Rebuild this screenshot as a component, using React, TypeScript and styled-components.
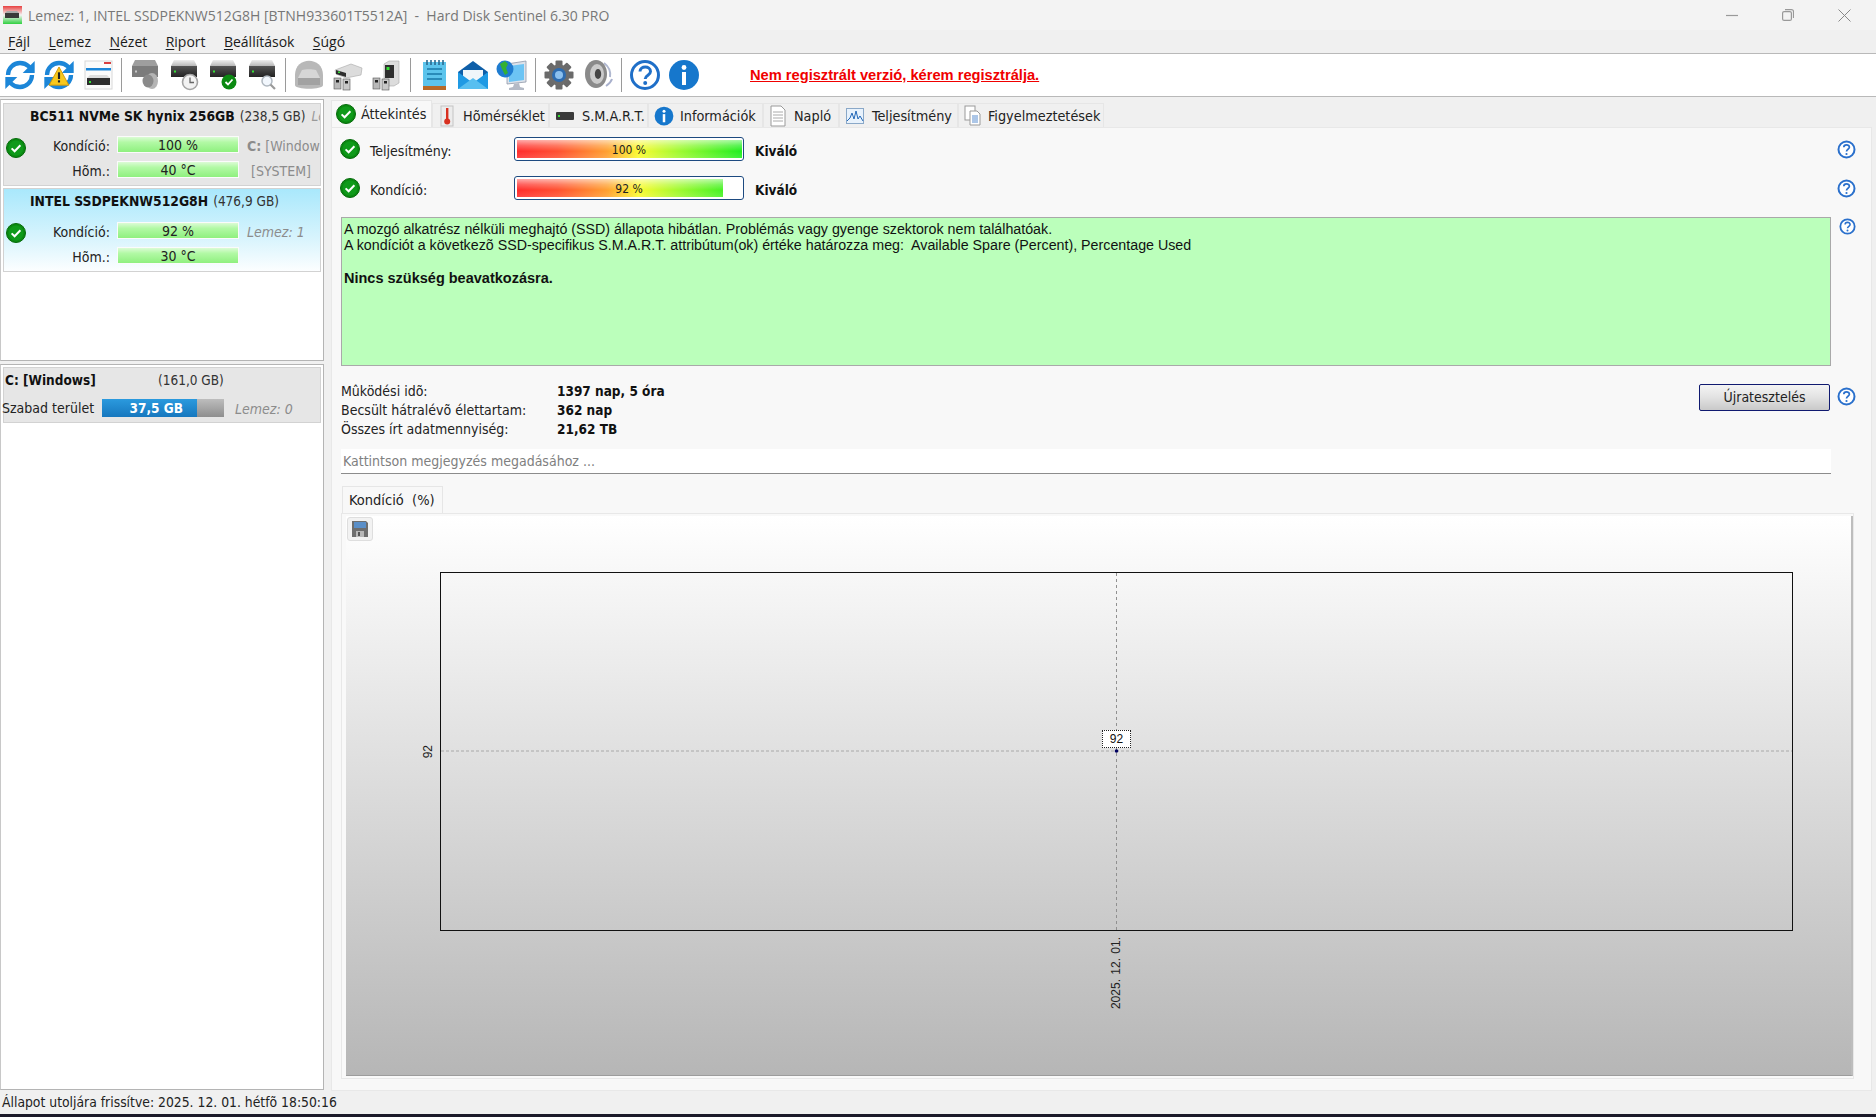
import React from 'react';
import styled, { createGlobalStyle } from 'styled-components';

const GlobalStyle = createGlobalStyle`
  html, body { margin: 0; padding: 0; background: #f0f0f0; }
  body { overflow: hidden; }
  * { box-sizing: border-box; }
`;

const tahoma = `"DejaVu Sans", "Liberation Sans", sans-serif`;
const segoe = `"Open Sans", "Noto Sans", sans-serif`;

const Win = styled.div`
  width: 1876px;
  height: 1117px;
  display: flex;
  flex-direction: column;
  background: #f0f0f0;
  color: #111;
  font-family: ${tahoma};
  font-stretch: condensed;
  font-size: 14px;
  overflow: hidden;
`;

const TitleBar = styled.div`
  height: 30px;
  flex: none;
  display: flex;
  align-items: center;
  padding-left: 3px;
  background: #f3f3f3;
  font-family: ${segoe};
  font-stretch: normal;
  font-size: 14px;
  color: #777;
  white-space: pre;
`;

const TitleText = styled.span`
  margin-left: 6px;
  flex: 1;
`;

const WinControls = styled.div`
  display: flex;
  align-items: center;
  gap: 44px;
  padding-right: 25px;
`;

const MenuBar = styled.div`
  height: 23px;
  flex: none;
  display: flex;
  align-items: center;
  gap: 18.4px;
  padding-left: 8px;
  font-family: ${segoe};
  font-stretch: normal;
  font-size: 14px;
  color: #1a1a1a;
  u { text-underline-offset: 2px; }
`;

const Toolbar = styled.div`
  height: 44px;
  flex: none;
  display: flex;
  align-items: center;
  padding-left: 3px;
  background: #fff;
  border-top: 1px solid #b9b9b9;
  border-bottom: 1px solid #b9b9b9;
`;

const ToolBtn = styled.div`
  width: 34px;
  height: 34px;
  margin-right: 5px;
  display: flex;
  align-items: center;
  justify-content: center;
  flex: none;
`;

const ToolSep = styled.div`
  width: 1px;
  height: 34px;
  background: #9a9a9a;
  margin: 0 6px 0 1px;
  flex: none;
`;

const Nag = styled.a`
  margin-left: 44px;
  color: #f00000;
  font-family: "Liberation Sans", Arial, sans-serif;
  font-stretch: normal;
  font-weight: 700;
  font-size: 14.67px;
  text-decoration: underline;
`;

const Main = styled.div`
  height: 993px;
  flex: none;
  display: flex;
`;

const LeftCol = styled.div`
  width: 324px;
  flex: none;
  display: flex;
  flex-direction: column;
  gap: 3px;
  padding-top: 2px;
`;

const ListBox = styled.div<{ $fill?: boolean }>`
  background: #fff;
  border: 1px solid #b4b4b4;
  border-left-color: #c8c8c8;
  padding: ${({ $fill }) => ($fill ? '2px' : '3px')} 2px 0 2px;
  ${({ $fill }) => ($fill ? 'flex: 1;' : 'height: 262px; flex: none;')}
`;

const DiskCard = styled.div<{ $selected?: boolean }>`
  height: ${({ $selected }) => ($selected ? '84px' : '83px')};
  margin-bottom: ${({ $selected }) => ($selected ? '0' : '2px')};
  padding: 4px 0 0 26px;
  position: relative;
  overflow: hidden;
  white-space: nowrap;
  background: ${({ $selected }) =>
    $selected ? 'linear-gradient(180deg, #a9e8fc 0%, #d8f4fd 60%, #fcfeff 100%)' : '#e6e6e6'};
  border: 1px solid #d2d2d2;
`;

const CardCheck = styled.div`
  position: absolute;
  left: 2px;
  top: 34px;
`;

const DiskName = styled.div<{ $tall?: boolean }>`
  height: ${({ $tall }) => ($tall ? '21px' : '20px')};
  line-height: 17px;
  font-size: 13.8px;
  b { font-weight: 700; color: #111; }
  span { font-size: 13.5px; color: #333; margin-left: 5px; }
  i { font-size: 13.5px; color: #999; margin-left: 6px; }
`;

const StatRow = styled.div`
  display: flex;
  align-items: center;
  height: 18px;
  margin-top: 7px;
  & + & { margin-top: 7px; }
`;

const StatLabel = styled.div`
  width: 80px;
  padding-top: 3px;
  flex: none;
  text-align: right;
  color: #222;
`;

const MiniBar = styled.div`
  width: 122px;
  height: 17px;
  margin-left: 7px;
  flex: none;
  text-align: center;
  line-height: 17px;
  border: 1px solid #fbfbfb;
  background: linear-gradient(180deg, #dcfbd6 0%, #b2f9a5 35%, #8ff07f 100%);
  color: #222;
`;

const SideNote = styled.div<{ $italic?: boolean; $indent?: number }>`
  margin-left: ${({ $indent }) => $indent ?? 8}px;
  padding-top: 3px;
  flex: none;
  color: #8c8c8c;
  font-style: ${({ $italic }) => ($italic ? 'italic' : 'normal')};
  b { font-weight: 700; }
`;

const VolumeCard = styled.div`
  height: 56px;
  background: #e6e6e6;
  border: 1px solid #d2d2d2;
  padding: 3px 0 0 1px;
  white-space: nowrap;
`;

const VolumeHead = styled.div`
  display: flex;
  height: 18px;
  line-height: 18px;
  b { width: 153px; font-weight: 700; font-size: 13.5px; }
  span { font-size: 13.5px; color: #333; }
`;

const VolumeRow = styled.div`
  display: flex;
  align-items: center;
  margin-top: 9px;
  margin-left: -3px;
`;

const VolumeLabel = styled.div`
  width: 100px;
  flex: none;
  color: #222;
`;

const FreeBar = styled.div`
  width: 122px;
  height: 18px;
  flex: none;
  background: linear-gradient(180deg, #bdbdbd, #8e8e8e);
  overflow: hidden;
`;

const FreeFill = styled.div`
  height: 100%;
  background: linear-gradient(180deg, #2b9ade, #1677be);
  color: #fff;
  font-weight: 700;
  font-size: 13.5px;
  line-height: 18px;
  text-align: center;
  padding-left: 14px;
`;

const RightCol = styled.div`
  width: 1541px;
  margin-left: 7px;
  flex: none;
  display: flex;
  flex-direction: column;
`;

const TabStrip = styled.div`
  height: 30px;
  flex: none;
  display: flex;
  align-items: flex-end;
`;

const Tab = styled.div<{ $active?: boolean; $w: number }>`
  width: ${({ $w }) => $w}px;
  height: ${({ $active }) => ($active ? '27px' : '24px')};
  flex: none;
  display: flex;
  align-items: center;
  gap: 5px;
  padding-left: 3px;
  white-space: nowrap;
  font-size: 14.3px;
  background: ${({ $active }) => ($active ? '#f8f8f8' : '#f0f0f0')};
  border: 1px solid #e6e6e6;
  border-bottom: none;
  color: #222;
`;

const TabIcon = styled.span<{ $w: number }>`
  width: ${({ $w }) => $w}px;
  flex: none;
  display: flex;
  align-items: center;
  justify-content: center;
`;

const Panel = styled.div`
  flex: 1;
  background: #f8f8f8;
  border: 1px solid #e8e8e8;
  padding: 9px 15px 11px 8px;
  display: flex;
  flex-direction: column;
`;

const RatingRow = styled.div`
  height: 24px;
  display: flex;
  align-items: center;
  margin-bottom: 15px;
`;

const RatingLabel = styled.div`
  width: 154px;
  padding: 3px 0 0 10px;
  flex: none;
  color: #222;
`;

const RatingBar = styled.div`
  width: 230px;
  height: 24px;
  flex: none;
  background: #fff;
  border: 1px solid #1d4a80;
  border-radius: 3px;
  position: relative;
  text-align: center;
  line-height: 24px;
  font-size: 12px;
`;

const RatingFill = styled.div`
  position: absolute;
  left: 2px;
  top: 2px;
  bottom: 2px;
  overflow: hidden;
  &::before {
    content: '';
    position: absolute;
    left: 0;
    top: 0;
    bottom: 0;
    width: 225px;
    background:
      linear-gradient(180deg, rgba(255, 255, 255, 0.6) 0%, rgba(255, 255, 255, 0.25) 30%, rgba(255, 255, 255, 0) 62%, rgba(255, 255, 255, 0.12) 100%),
      linear-gradient(90deg, #ff2c2c 0%, #ff5030 18%, #ffa030 40%, #fbfb30 54%, #a0fa30 72%, #20ee20 100%);
  }
`;

const RatingText = styled.span`
  position: relative;
  color: #222;
`;

const RatingWord = styled.div`
  margin-left: 11px;
  padding-top: 3px;
  font-weight: 700;
  font-size: 13.5px;
  flex: 1;
`;

const HealthRow = styled.div`
  display: flex;
  align-items: flex-start;
  height: 149px;
  gap: 8px;
  margin-top: 2px;
`;

const HealthBox = styled.div`
  width: 1490px;
  height: 149px;
  margin-left: 1px;
  flex: none;
  padding: 3px 2px;
  background: #bbffbb;
  border: 1px solid #a9a9a9;
  font-family: "Liberation Sans", Arial, sans-serif;
  font-stretch: normal;
  font-size: 14.25px;
  line-height: 16.4px;
  color: #111;
  white-space: pre-wrap;
  p { margin: 0; }
  b { display: block; margin-top: 16.4px; font-size: 14.5px; }
`;

const StatsRow = styled.div`
  display: flex;
  margin-top: 15px;
  height: 57px;
`;

const StatsGrid = styled.div`
  width: 1361px;
  display: grid;
  grid-template-columns: 216px 1fr;
  grid-auto-rows: 19px;
  align-items: center;
  margin-left: 1px;
  color: #222;
  b { font-weight: 700; font-size: 13.5px; color: #111; }
`;

const RetestBtn = styled.div`
  width: 131px;
  height: 27px;
  margin-top: 3px;
  flex: none;
  border: 1px solid #101a70;
  border-radius: 2px;
  background: linear-gradient(180deg, #f4f4f4 0%, #e2e2e2 50%, #c9c9c9 100%);
  text-align: center;
  line-height: 25px;
  color: #222;
  font-size: 14px;
`;

const HelpSlot = styled.div`
  margin: 6px 0 0 7px;
`;

const NoteInput = styled.div`
  width: 1490px;
  height: 25px;
  margin: 11px 0 0 1px;
  padding-left: 2px;
  background: #fff;
  border-bottom: 1px solid #8c8c8c;
  line-height: 24px;
  color: #808080;
  font-size: 14px;
`;

const SubTab = styled.div`
  width: 101px;
  height: 27px;
  margin: 12px 0 0 2px;
  flex: none;
  padding-left: 6px;
  line-height: 26px;
  background: #f8f8f8;
  border: 1px solid #e6e6e6;
  border-bottom: none;
  color: #222;
  font-size: 14.5px;
  white-space: pre;
`;

const ChartFrame = styled.div`
  width: 1513px;
  height: 566px;
  margin-left: 1px;
  flex: none;
  padding: 2px 0 2px 4px;
  background: #f9f9f9;
  border: 1px solid #e8e8e8;
`;

const ChartBg = styled.div`
  position: relative;
  height: 100%;
  padding: 56px 0 0 94px;
  background: linear-gradient(180deg, #ffffff 0%, #b6b6b6 100%);
  border-right: 2px solid #bdbdbd;
  border-bottom: 1px solid #9c9c9c;
`;

const SaveBtn = styled.div`
  position: absolute;
  left: 1px;
  top: 1px;
  width: 26px;
  height: 24px;
  display: flex;
  align-items: center;
  justify-content: center;
  background: #f2f2f2;
  border: 1px solid #dedede;
  border-radius: 3px;
`;

const Plot = styled.div`
  position: relative;
  width: 1353px;
  height: 359px;
  border: 1px solid #111;
`;

const Crosshair = styled.svg`
  position: absolute;
  left: 0;
  top: 0;
`;

const ValueTag = styled.div`
  position: absolute;
  left: 661px;
  top: 157px;
  width: 29px;
  height: 18px;
  background: #fff;
  border: 1px dotted #222;
  text-align: center;
  line-height: 16px;
  font-family: "Liberation Sans", Arial, sans-serif;
  font-stretch: normal;
  font-size: 12px;
`;

const AxisLabel = styled.div<{ $left: number; $top: number }>`
  position: absolute;
  left: ${({ $left }) => $left}px;
  top: ${({ $top }) => $top}px;
  writing-mode: vertical-rl;
  transform: rotate(180deg);
  font-family: "Liberation Sans", Arial, sans-serif;
  font-stretch: normal;
  font-size: 12px;
  word-spacing: 1px;
  line-height: 14px;
  color: #222;
  white-space: pre;
`;

const StatusBar = styled.div`
  height: 24px;
  flex: none;
  padding-left: 2px;
  line-height: 25px;
  font-size: 13.8px;
  color: #222;
`;

const BottomEdge = styled.div`
  height: 3px;
  flex: none;
  background: #1c1a2a;
`;

const CheckIcon = ({ size = 20 }: { size?: number }) => (
  <svg width={size} height={size} viewBox="0 0 20 20">
    <circle cx="10" cy="10" r="9.5" fill="#0b8a12" stroke="#056a0a" />
    <circle cx="10" cy="10" r="7.4" fill="#0f9a1a" />
    <path d="M5.6 10.4l3 2.9 5.8-6" fill="none" stroke="#fff" strokeWidth="2" />
  </svg>
);

const HelpIcon = () => (
  <svg width="19" height="19" viewBox="0 0 19 19">
    <circle cx="9.5" cy="9.5" r="8" fill="#fff" stroke="#2a70cc" strokeWidth="2" />
    <path d="M6.8 7.3c0-3.2 5.6-3.2 5.6 0 0 2-2.9 2-2.9 4.2" fill="none" stroke="#2a70cc" strokeWidth="1.7" />
    <circle cx="9.5" cy="14" r="1.1" fill="#2a70cc" />
  </svg>
);

const Refresh = ({ warn }: { warn?: boolean }) => (
  <svg width="32" height="32" viewBox="0 0 24 24" fill="none" stroke="#1c86d8" strokeWidth="3.2">
    <path d="M3 12a9 9 0 0 1 9-9c2.5 0 5 1 6.7 2.7L20 7" />
    <path d="M21 12a9 9 0 0 1-9 9c-2.5 0-5-1-6.7-2.7L4 17" />
    <path d="M23 1.5v9h-9z" fill="#1c86d8" stroke="none" />
    <path d="M1 22.5v-9h9z" fill="#1c86d8" stroke="none" />
    {warn && (
      <g stroke="none">
        <path d="M12 6l7.4 13.6H4.6z" fill="#f8c81c" stroke="#d09808" strokeWidth="0.7" />
        <rect x="11.2" y="10" width="1.6" height="5" fill="#222" />
        <rect x="11.2" y="16" width="1.6" height="1.6" fill="#222" />
      </g>
    )}
  </svg>
);

const DriveGrad = () => (
  <defs>
    <linearGradient id="driveTop" x1="0" y1="0" x2="0" y2="1">
      <stop offset="0" stopColor="#efefef" />
      <stop offset="1" stopColor="#b8b8b8" />
    </linearGradient>
    <linearGradient id="driveBox" x1="0" y1="0" x2="0" y2="1">
      <stop offset="0" stopColor="#555" />
      <stop offset="1" stopColor="#222" />
    </linearGradient>
  </defs>
);

const DriveShape = ({ muted }: { muted?: boolean }) => (
  <g transform="translate(0 1)">
    <path d="M6 0h20l3 6H3z" fill={muted ? '#9e9e9e' : 'url(#driveTop)'} />
    <rect x="3" y="6" width="26" height="11" fill={muted ? '#7c7c7c' : 'url(#driveBox)'} />
    <rect x="6" y="10.5" width="2" height="2" fill={muted ? '#c8c8c8' : '#35e035'} />
  </g>
);

const Svg32 = ({ children }: { children: React.ReactNode }) => (
  <svg width="32" height="32" viewBox="0 0 32 32">
    <DriveGrad />
    {children}
  </svg>
);

const DriveSpeaker = () => (
  <Svg32>
    <DriveShape muted />
    <ellipse cx="23" cy="22" rx="6" ry="8" fill="#b4b4b4" />
    <ellipse cx="19" cy="22" rx="5.5" ry="6.5" fill="#8a8a8a" />
  </Svg32>
);

const DriveClock = () => (
  <Svg32>
    <DriveShape />
    <circle cx="22" cy="23" r="7.5" fill="#f2f2f2" stroke="#a4a4a4" strokeWidth="1.6" />
    <path d="M22 18.5V23.5h4" fill="none" stroke="#666" strokeWidth="1.3" />
  </Svg32>
);

const DriveCheck = () => (
  <Svg32>
    <DriveShape />
    <circle cx="22" cy="23" r="7.5" fill="#0b8a12" />
    <path d="M18.5 23l2.5 2.5 4.5-5" fill="none" stroke="#fff" strokeWidth="1.8" />
  </Svg32>
);

const DriveSearch = () => (
  <Svg32>
    <DriveShape />
    <circle cx="21" cy="22" r="5" fill="#f2f7fd" stroke="#b0b8c0" strokeWidth="1.5" />
    <path d="M24.5 25.5l4.5 4.5" stroke="#9a9a9a" strokeWidth="2.2" />
  </Svg32>
);

const DriveList = () => (
  <Svg32>
    <rect x="3" y="2" width="27" height="28" fill="#fbfbfb" stroke="#d8d8d8" />
    <rect x="22" y="3" width="7" height="2" fill="#d84040" />
    <rect x="4" y="9" width="25" height="2.5" fill="#1c86d8" />
    <path d="M8 16h17l3 3H5z" fill="#dedede" />
    <rect x="5" y="19" width="23" height="7" fill="#2e2e2e" />
    <rect x="7" y="22" width="2" height="2" fill="#35e035" />
  </Svg32>
);

const Dome = () => (
  <Svg32>
    <path d="M2 16C2-3 30-3 30 16v10c0 5-28 5-28 0z" fill="#b8b8b8" />
    <path d="M9 11c3-1 11-1 14 0l4 8H5z" fill="#d6d6d6" />
    <rect x="5" y="19" width="22" height="7" fill="#a2a2a2" />
  </Svg32>
);

const Copier = () => (
  <Svg32>
    <path d="M3 11L19 5l11 4-1 7-15 3-10-4z" fill="#dcdcdc" stroke="#a8a8a8" strokeWidth=".6" />
    <path d="M4 11l10 3v4L4 15z" fill="#2e2e2e" />
    <rect x="6" y="12.5" width="2" height="1.5" fill="#35e035" />
    <rect x="2" y="19" width="7" height="11" fill="#b8b8b8" stroke="#555" strokeWidth=".6" />
    <rect x="11" y="20" width="7" height="11" fill="#c8c8c8" stroke="#555" strokeWidth=".6" />
    <rect x="4" y="21" width="3" height="2.5" fill="#222" />
    <rect x="13" y="22" width="3" height="2.5" fill="#222" />
  </Svg32>
);

const Tower = () => (
  <Svg32>
    <path d="M13 5l5-3h10v22l-5 3H13z" fill="#dcdcdc" stroke="#a8a8a8" strokeWidth=".6" />
    <rect x="14" y="6" width="9" height="13" fill="#2e2e2e" />
    <rect x="15.5" y="8" width="3" height="3" fill="#35e035" />
    <rect x="2" y="19" width="7" height="11" fill="#b8b8b8" stroke="#555" strokeWidth=".6" />
    <rect x="11" y="20" width="7" height="11" fill="#c8c8c8" stroke="#555" strokeWidth=".6" />
    <rect x="4" y="21" width="3" height="2.5" fill="#222" />
    <rect x="13" y="22" width="3" height="2.5" fill="#222" />
  </Svg32>
);

const NoteBook = () => (
  <Svg32>
    <rect x="5" y="3" width="23" height="25" fill="#5cc4ec" />
    <rect x="5" y="27" width="23" height="4" fill="#b86a28" />
    <path d="M9 10h15M9 15h15M9 20h15" stroke="#1878a8" strokeWidth="1.6" />
    <path d="M9 1v5M13 1v5M17 1v5M21 1v5M25 1v5" stroke="#2a6a90" strokeWidth="1.6" />
  </Svg32>
);

const Mail = () => (
  <Svg32>
    <path d="M1 13L16 2l15 11v17H1z" fill="#0f5fa8" />
    <path d="M6 11h20v7l-10 6-10-6z" fill="#f0f6fa" />
    <path d="M1 13l15 11 15-11v17H1z" fill="#1f9ae4" />
    <path d="M1 30l15-11 15 11z" fill="#58bff0" />
  </Svg32>
);

const Globe = () => (
  <Svg32>
    <path d="M11 5l19-3v21l-19 2z" fill="#dce2ea" stroke="#9098a8" strokeWidth=".8" />
    <path d="M13 7l15-2v16l-15 2z" fill="#6cc4f4" />
    <path d="M18 25l-1 3-4 1v2h15v-2l-4-1-1-4z" fill="#b4bac6" />
    <circle cx="9" cy="10" r="8.5" fill="#1f7cd0" />
    <path d="M4 5l5-3 3 3-2 4 2 5-3 2-3-6z" fill="#34b034" />
  </Svg32>
);

const Gear = () => (
  <Svg32>
    <g fill="#6a6a6a">
      {[0, 45, 90, 135].map((a) => (
        <rect key={a} x="12.5" y="1.5" width="7" height="29" rx="1" transform={`rotate(${a} 16 16)`} />
      ))}
    </g>
    <circle cx="16" cy="16" r="10.5" fill="#6c6c6c" />
    <circle cx="16" cy="16" r="7" fill="#2e6cb0" />
    <circle cx="16" cy="16" r="4" fill="#8cc0ee" />
  </Svg32>
);

const Speaker = () => (
  <Svg32>
    <path d="M22 4c4 3 7 8 6 14" fill="none" stroke="#b0b8d0" strokeWidth="2" />
    <path d="M24 27c3-2 5-4 6-7" fill="none" stroke="#a8b0cc" strokeWidth="2" />
    <ellipse cx="14" cy="15" rx="11" ry="14" fill="#8a8a8a" />
    <ellipse cx="15" cy="15" rx="7" ry="10" fill="#cacaca" />
    <ellipse cx="16" cy="15" rx="3.2" ry="5" fill="#444" />
  </Svg32>
);

const BigHelp = () => (
  <svg width="32" height="32" viewBox="0 0 32 32">
    <circle cx="16" cy="16" r="13.5" fill="#fff" stroke="#1f6fc8" strokeWidth="3" />
    <path d="M11 12.5c0-6 10.5-6 10.5 0 0 3.8-5.3 3.5-5.3 7.5" fill="none" stroke="#1f6fc8" strokeWidth="3" />
    <circle cx="16.2" cy="24" r="2" fill="#1f6fc8" />
  </svg>
);

const InfoIcon = ({ size = 32 }: { size?: number }) => (
  <svg width={size} height={size} viewBox="0 0 32 32">
    <circle cx="16" cy="16" r="15" fill="#1677cc" />
    <circle cx="16" cy="8.5" r="2.4" fill="#fff" />
    <rect x="14" y="13" width="4" height="13" fill="#fff" />
  </svg>
);

const Thermo = () => (
  <svg width="16" height="22" viewBox="0 0 16 22">
    <rect x="2" y="1" width="12" height="20" fill="#ececec" stroke="#c4c4c4" />
    <rect x="7" y="3" width="2.4" height="12" fill="#d83020" />
    <circle cx="8.2" cy="16.5" r="3" fill="#d83020" />
  </svg>
);

const TinyDrive = () => (
  <svg width="18" height="8" viewBox="0 0 18 8">
    <rect width="18" height="8" rx="1" fill="#3a3a3a" />
    <rect x="2" y="3" width="2" height="2" fill="#35e035" />
  </svg>
);

const DocIcon = ({ stacked }: { stacked?: boolean }) => (
  <svg width="18" height="22" viewBox="0 0 18 22">
    {stacked && <rect x="1" y="1" width="10" height="14" fill="#fff" stroke="#999" />}
    <path d={stacked ? 'M6 6h7l3 3v11H6z' : 'M2 1h10l4 4v16H2z'} fill="#fff" stroke="#9a9a9a" />
    <path
      d={stacked ? 'M8 11h6M8 13h6M8 15h6M8 17h6' : 'M4 7h10M4 10h10M4 13h10M4 16h10'}
      stroke={stacked ? '#5a8ed0' : '#aaa'}
    />
  </svg>
);

const PerfIcon = () => (
  <svg width="18" height="16" viewBox="0 0 18 16">
    <rect x=".5" y=".5" width="17" height="15" fill="#e8f2fc" stroke="#8aa8c8" />
    <path d="M1 13l3-3 2-5 2 6 2-8 2 8 2-3 3 5" fill="none" stroke="#2268b8" />
  </svg>
);

const TitleLogo = () => (
  <svg width="19" height="18" viewBox="0 0 19 18">
    <defs>
      <linearGradient id="logo" x1="0" y1="0" x2="0" y2="1">
        <stop offset="0" stopColor="#e84040" />
        <stop offset=".5" stopColor="#f4f4f4" />
        <stop offset="1" stopColor="#30d040" />
      </linearGradient>
    </defs>
    <rect width="19" height="18" fill="url(#logo)" />
    <rect x="2" y="7" width="14" height="5" fill="#3a3a3a" />
    <path d="M4 5h10l2 2H2z" fill="#aaa" />
  </svg>
);

const SaveIcon = () => (
  <svg width="18" height="18" viewBox="0 0 18 18">
    <path d="M1 1h14l2 2v14H1z" fill="#6e6e6e" />
    <rect x="3" y="2" width="12" height="6" fill="#5a8fc8" />
    <rect x="5" y="11" width="8" height="6" fill="#b8b8b8" />
    <rect x="7" y="12" width="2" height="4" fill="#555" />
  </svg>
);

const WindowIcons = () => (
  <WinControls>
    <svg width="12" height="12" viewBox="0 0 12 12">
      <path d="M0 6.5h12" stroke="#999" strokeWidth="1.2" />
    </svg>
    <svg width="12" height="12" viewBox="0 0 12 12" fill="none" stroke="#999" strokeWidth="1.2">
      <rect x=".6" y="2.6" width="8.8" height="8.8" rx="1.5" />
      <path d="M3 .6h6.5c1 0 2 1 2 2V9" />
    </svg>
    <svg width="13" height="13" viewBox="0 0 13 13" stroke="#888" strokeWidth="1">
      <path d="M.5.5l12 12M12.5.5l-12 12" />
    </svg>
  </WinControls>
);

const menuItems = [
  ['F', 'ájl'],
  ['L', 'emez'],
  ['N', 'ézet'],
  ['R', 'iport'],
  ['B', 'eállítások'],
  ['S', 'úgó'],
];

const toolGroups: React.ReactNode[][] = [
  [<Refresh />, <Refresh warn />, <DriveList />],
  [<DriveSpeaker />, <DriveClock />, <DriveCheck />, <DriveSearch />],
  [<Dome />, <Copier />, <Tower />],
  [<NoteBook />, <Mail />, <Globe />],
  [<Gear />, <Speaker />],
  [<BigHelp />, <InfoIcon />],
];

const tabs = [
  { label: 'Áttekintés', w: 101, iconW: 21, icon: <CheckIcon />, active: true },
  { label: 'Hõmérséklet', w: 117, iconW: 22, icon: <Thermo /> },
  { label: 'S.M.A.R.T.', w: 99, iconW: 24, icon: <TinyDrive /> },
  { label: 'Információk', w: 115, iconW: 23, icon: <InfoIcon size={20} /> },
  { label: 'Napló', w: 76, iconW: 22, icon: <DocIcon /> },
  { label: 'Teljesítmény', w: 119, iconW: 24, icon: <PerfIcon /> },
  { label: 'Figyelmeztetések', w: 146, iconW: 21, icon: <DocIcon stacked /> },
];

const App: React.FC = () => {
  return (
    <Win>
      <GlobalStyle />
      <TitleBar>
        <TitleLogo />
        <TitleText>Lemez: 1, INTEL SSDPEKNW512G8H [BTNH933601T5512A]  -  Hard Disk Sentinel 6.30 PRO</TitleText>
        <WindowIcons />
      </TitleBar>
      <MenuBar>
        {menuItems.map(([first, rest]) => (
          <span key={first}>
            <u>{first}</u>
            {rest}
          </span>
        ))}
      </MenuBar>
      <Toolbar>
        {toolGroups.map((group, i) => (
          <React.Fragment key={i}>
            {group.map((icon, j) => (
              <ToolBtn key={j}>{icon}</ToolBtn>
            ))}
            {i < toolGroups.length - 1 && <ToolSep />}
          </React.Fragment>
        ))}
        <Nag>Nem regisztrált verzió, kérem regisztrálja.</Nag>
      </Toolbar>
      <Main>
        <LeftCol>
          <ListBox>
            <DiskCard>
              <CardCheck>
                <CheckIcon />
              </CardCheck>
              <DiskName>
                <b>BC511 NVMe SK hynix 256GB</b>
                <span>(238,5 GB)</span>
                <i>Lemez: 0</i>
              </DiskName>
              <StatRow>
                <StatLabel>Kondíció:</StatLabel>
                <MiniBar>100 %</MiniBar>
                <SideNote>
                  <b>C:</b> [Windows]
                </SideNote>
              </StatRow>
              <StatRow>
                <StatLabel>Hõm.:</StatLabel>
                <MiniBar>40 °C</MiniBar>
                <SideNote $indent={12}>[SYSTEM]</SideNote>
              </StatRow>
            </DiskCard>
            <DiskCard $selected>
              <CardCheck>
                <CheckIcon />
              </CardCheck>
              <DiskName $tall>
                <b>INTEL SSDPEKNW512G8H</b>
                <span>(476,9 GB)</span>
              </DiskName>
              <StatRow>
                <StatLabel>Kondíció:</StatLabel>
                <MiniBar>92 %</MiniBar>
                <SideNote $italic>Lemez: 1</SideNote>
              </StatRow>
              <StatRow>
                <StatLabel>Hõm.:</StatLabel>
                <MiniBar>30 °C</MiniBar>
              </StatRow>
            </DiskCard>
          </ListBox>
          <ListBox $fill>
            <VolumeCard>
              <VolumeHead>
                <b>C: [Windows]</b>
                <span>(161,0 GB)</span>
              </VolumeHead>
              <VolumeRow>
                <VolumeLabel>Szabad terület</VolumeLabel>
                <FreeBar>
                  <FreeFill style={{ width: `${(37.5 / 48.4) * 100}%` }}>37,5 GB</FreeFill>
                </FreeBar>
                <SideNote $italic $indent={11}>
                  Lemez: 0
                </SideNote>
              </VolumeRow>
            </VolumeCard>
          </ListBox>
        </LeftCol>
        <RightCol>
          <TabStrip>
            {tabs.map((t) => (
              <Tab key={t.label} $w={t.w} $active={t.active}>
                <TabIcon $w={t.iconW}>{t.icon}</TabIcon>
                {t.label}
              </Tab>
            ))}
          </TabStrip>
          <Panel>
            <RatingRow>
              <CheckIcon />
              <RatingLabel>Teljesítmény:</RatingLabel>
              <RatingBar>
                <RatingFill style={{ width: 225 }} />
                <RatingText>100 %</RatingText>
              </RatingBar>
              <RatingWord>Kiváló</RatingWord>
              <HelpIcon />
            </RatingRow>
            <RatingRow>
              <CheckIcon />
              <RatingLabel>Kondíció:</RatingLabel>
              <RatingBar>
                <RatingFill style={{ width: 206 }} />
                <RatingText>92 %</RatingText>
              </RatingBar>
              <RatingWord>Kiváló</RatingWord>
              <HelpIcon />
            </RatingRow>
            <HealthRow>
              <HealthBox>
                <p>A mozgó alkatrész nélküli meghajtó (SSD) állapota hibátlan. Problémás vagy gyenge szektorok nem találhatóak.</p>
                <p>A kondíciót a következõ SSD-specifikus S.M.A.R.T. attribútum(ok) értéke határozza meg:  Available Spare (Percent), Percentage Used</p>
                <b>Nincs szükség beavatkozásra.</b>
              </HealthBox>
              <HelpIcon />
            </HealthRow>
            <StatsRow>
              <StatsGrid>
                <span>Mûködési idõ:</span>
                <b>1397 nap, 5 óra</b>
                <span>Becsült hátralévõ élettartam:</span>
                <b>362 nap</b>
                <span>Összes írt adatmennyiség:</span>
                <b>21,62 TB</b>
              </StatsGrid>
              <RetestBtn>Újratesztelés</RetestBtn>
              <HelpSlot>
                <HelpIcon />
              </HelpSlot>
            </StatsRow>
            <NoteInput>Kattintson megjegyzés megadásához ...</NoteInput>
            <SubTab>Kondíció  (%)</SubTab>
            <ChartFrame>
              <ChartBg>
                <SaveBtn>
                  <SaveIcon />
                </SaveBtn>
                <AxisLabel $left={75} $top={229}>92</AxisLabel>
                <Plot>
                  <Crosshair width="1351" height="357">
                    <path d="M0 178H1351" stroke="#a8a8a8" strokeDasharray="3 2" fill="none" />
                    <path d="M675.5 0V357" stroke="#909090" strokeDasharray="3 3" fill="none" />
                    <circle cx="675.5" cy="178" r="1.8" fill="#000060" />
                  </Crosshair>
                  <ValueTag>92</ValueTag>
                  <AxisLabel $left={668} $top={364}>2025. 12. 01.</AxisLabel>
                </Plot>
              </ChartBg>
            </ChartFrame>
          </Panel>
        </RightCol>
      </Main>
      <StatusBar>Állapot utoljára frissítve: 2025. 12. 01. hétfõ 18:50:16</StatusBar>
      <BottomEdge />
    </Win>
  );
};

export default App;
